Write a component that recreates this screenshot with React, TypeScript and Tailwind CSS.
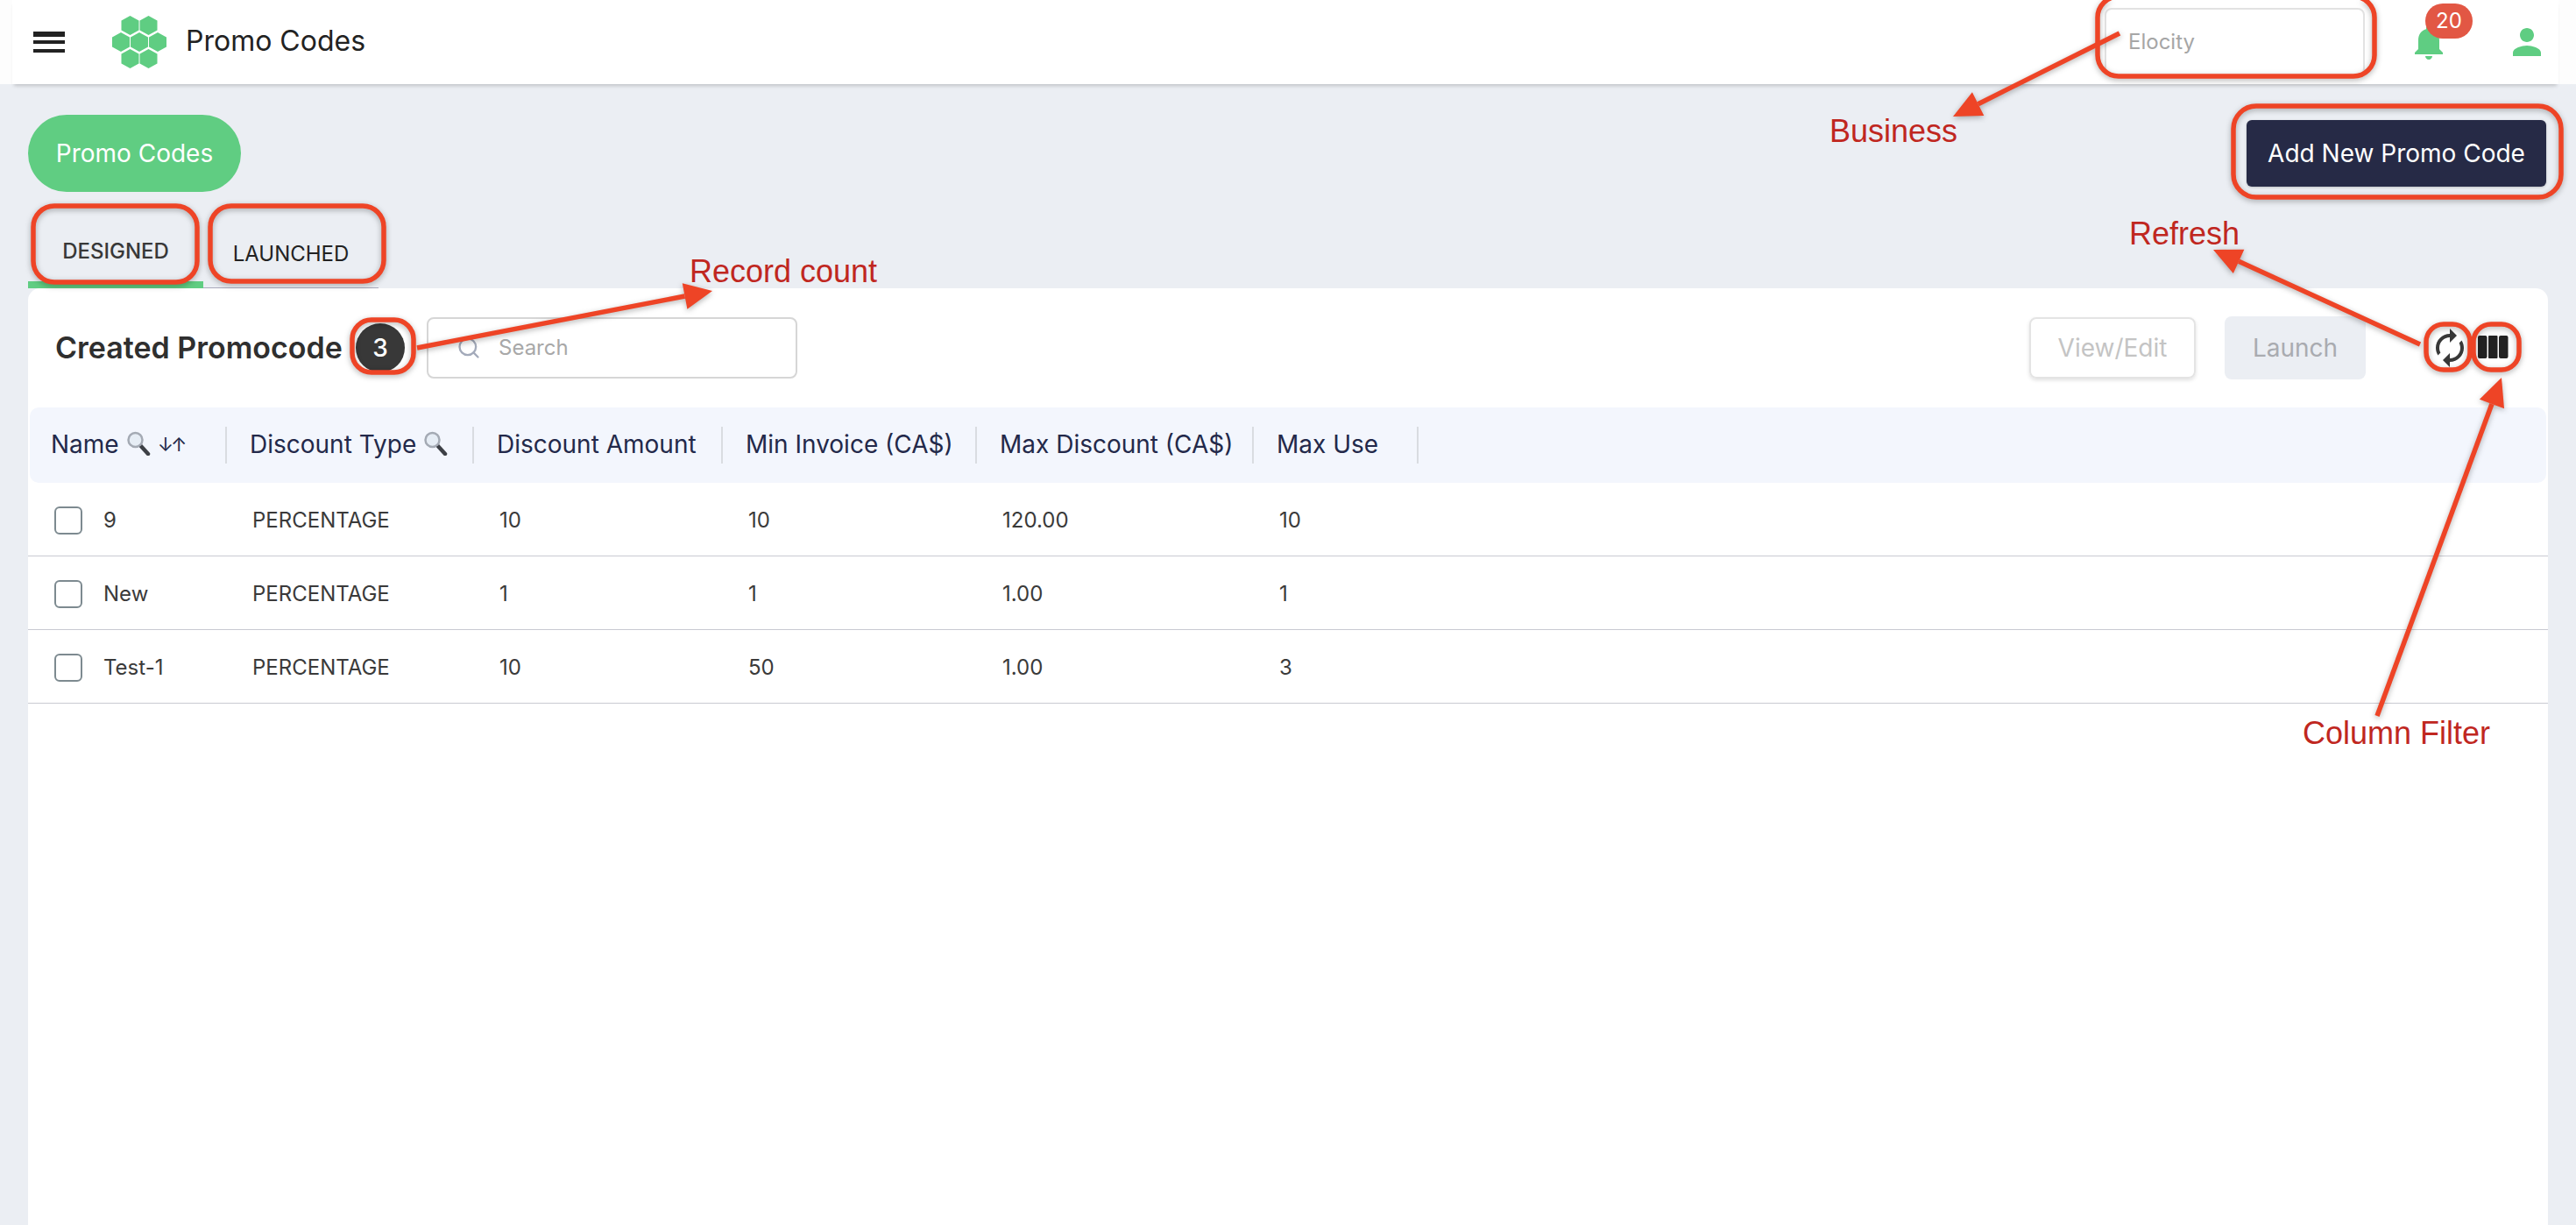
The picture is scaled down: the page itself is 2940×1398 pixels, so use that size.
import { Search } from 'lucide-react';

const columns = [
  { label: 'Name', search: true, sort: true },
  { label: 'Discount Type', search: true },
  { label: 'Discount Amount' },
  { label: 'Min Invoice (CA$)' },
  { label: 'Max Discount (CA$)' },
  { label: 'Max Use' },
];

const rows = [
  ['9', 'PERCENTAGE', '10', '10', '120.00', '10'],
  ['New', 'PERCENTAGE', '1', '1', '1.00', '1'],
  ['Test-1', 'PERCENTAGE', '10', '50', '1.00', '3'],
];

const hexCenters = [
  [20.5, 11],
  [41.5, 11],
  [10, 30],
  [31, 30],
  [52, 30],
  [20.5, 49],
  [41.5, 49],
];

function Logo() {
  return (
    <svg width="62" height="60" viewBox="0 0 62 60" fill="#5fcd82">
      {hexCenters.map(([x, y]) => (
        <polygon
          key={`${x}-${y}`}
          points={`${x},${y - 11} ${x + 10},${y - 5.5} ${x + 10},${y + 5.5} ${x},${y + 11} ${x - 10},${y + 5.5} ${x - 10},${y - 5.5}`}
        />
      ))}
    </svg>
  );
}

function MaterialIcon({ d, className }: { d: string; className: string }) {
  return (
    <svg viewBox="0 0 24 24" fill="currentColor" className={className}>
      <path d={d} />
    </svg>
  );
}

function ColumnsIcon() {
  return (
    <svg width="48" height="48" viewBox="0 0 48 48" fill="#222222">
      <rect x="8" y="10" width="10.5" height="26" rx="2" />
      <rect x="20" y="10" width="10.5" height="26" rx="1" />
      <rect x="32" y="10" width="10.5" height="26" rx="2" />
    </svg>
  );
}

function Magnifier() {
  return (
    <svg width="28" height="28" viewBox="0 0 28 28" className="shrink-0">
      <line x1="15" y1="15" x2="25" y2="26" stroke="#3d4046" strokeWidth="4.5" strokeLinecap="round" />
      <circle cx="10.5" cy="10" r="8" fill="#e6edf5" stroke="#a4aab4" strokeWidth="2.5" />
    </svg>
  );
}

function Arrow({ x1, y1, x2, y2 }: { x1: number; y1: number; x2: number; y2: number }) {
  const len = Math.hypot(x2 - x1, y2 - y1);
  const ux = (x2 - x1) / len;
  const uy = (y2 - y1) / len;
  const bx = x2 - ux * 32;
  const by = y2 - uy * 32;
  return (
    <g>
      <line x1={x1} y1={y1} x2={bx} y2={by} stroke="#ee4426" strokeWidth="5.5" />
      <polygon
        fill="#ee4426"
        points={`${x2},${y2} ${bx - uy * 15},${by + ux * 15} ${bx + uy * 15},${by - ux * 15}`}
      />
    </g>
  );
}

const boxes = [
  [38, 235, 187, 87, 24],
  [240, 235, 198, 86, 24],
  [2394, -4, 316, 91, 24],
  [2549, 121, 374, 104, 26],
  [402, 365, 70, 60, 22],
  [2769, 370, 50, 52, 20],
  [2823, 370, 52, 52, 20],
];

function Annotations() {
  return (
    <>
      <svg
        viewBox="0 0 2940 1398"
        fill="none"
        className="absolute left-0 top-0 z-20 h-[1398px] w-[2940px] drop-shadow-[0_2px_3px_rgba(0,0,0,0.3)]"
      >
        {boxes.map(([x, y, w, h, r]) => (
          <rect key={`${x}-${y}`} x={x} y={y} width={w} height={h} rx={r} stroke="#ee4426" strokeWidth="5.5" />
        ))}
        <Arrow x1={2419} y1={38} x2={2229} y2={133} />
        <Arrow x1={476} y1={397} x2={813} y2={332} />
        <Arrow x1={2762} y1={393} x2={2526} y2={285} />
        <Arrow x1={2713} y1={817} x2={2855} y2={431} />
      </svg>
      <div className="absolute left-[2088px] top-[130px] z-20 text-[36px] leading-10 text-[#c0271f] font-['Liberation_Sans',sans-serif]">Business</div>
      <div className="absolute left-[787px] top-[290px] z-20 text-[36px] leading-10 text-[#c0271f] font-['Liberation_Sans',sans-serif]">Record count</div>
      <div className="absolute left-[2430px] top-[247px] z-20 text-[36px] leading-10 text-[#c0271f] font-['Liberation_Sans',sans-serif]">Refresh</div>
      <div className="absolute left-[2628px] top-[817px] z-20 text-[36px] leading-10 text-[#c0271f] font-['Liberation_Sans',sans-serif]">Column Filter</div>
    </>
  );
}

function Header() {
  return (
    <div className="relative z-10 bg-[#fdfdfd] pl-[14px] pr-[20px]">
      <header className="flex h-24 items-center bg-white pl-[18px] pr-[12px] shadow-[0_4px_4px_-2px_rgba(0,0,0,0.18)]">
        <MaterialIcon d="M3 18h18v-2H3v2zm0-5h18v-2H3v2zm0-6v2h18V6H3z" className="h-12 w-12 text-[#222222]" />
        <div className="ml-[48px]">
          <Logo />
        </div>
        <div className="mb-[2px] ml-[22px] text-[32px] text-[#222222]">Promo Codes</div>
        <div className="ml-auto flex h-[78px] w-[297px] items-center rounded-[8px] border-2 border-[#e2e2e2] pl-[25px] text-[24px] text-[#a6a6a6]">
          Elocity
        </div>
        <div className="relative ml-[49px] h-12 w-12">
          <MaterialIcon
            d="M12 22c1.1 0 2-.9 2-2h-4c0 1.1.89 2 2 2zm6-6v-5c0-3.07-1.64-5.64-4.5-6.32V4c0-.83-.67-1.5-1.5-1.5s-1.5.67-1.5 1.5v.68C7.63 5.36 6 7.92 6 11v5l-2 2v1h16v-1l-2-2z"
            className="h-12 w-12 text-[#5fcd82]"
          />
          <span className="absolute left-[20px] top-[-20px] flex h-10 w-[54px] items-center justify-center rounded-full bg-[#e25744] text-[24px] text-white">
            20
          </span>
        </div>
        <MaterialIcon
          d="M12 12c2.21 0 4-1.79 4-4s-1.79-4-4-4-4 1.79-4 4 1.79 4 4 4zm0 2c-2.67 0-8 1.34-8 4v2h16v-2c0-2.66-5.33-4-8-4z"
          className="ml-[64px] h-12 w-12 text-[#5fcd82]"
        />
      </header>
    </div>
  );
}

const gridCols = 'grid grid-cols-[227px_282px_284px_290px_316px_188px_1fr]';
const headCols = 'grid grid-cols-[225px_282px_284px_290px_316px_188px_1fr]';

function PromoTable() {
  return (
    <div>
      <div className={`${headCols} mx-[2px] h-[86px] items-center rounded-[10px] bg-[#f3f6fd] text-[28px] text-[#23294a]`}>
        {columns.map((col, i) => (
          <div key={col.label} className={`flex h-[42px] items-center border-r-2 border-[#d9dce1] ${i === 0 ? 'pl-[24px]' : 'pl-[26px]'}`}>
            <span className="mt-[-2px]">{col.label}</span>
            {col.search && (
              <span className="ml-[8px] mt-[-4px]">
                <Magnifier />
              </span>
            )}
            {col.sort && <span className="ml-[8px] mt-[-2px] text-[22px] tracking-[-3px]">↓↑</span>}
          </div>
        ))}
      </div>
      {rows.map((row) => (
        <div key={row[0]} className={`${gridCols} h-[84px] items-center border-b border-[#c9cad2] pt-[2px] text-[24px] text-[#3a3a3a]`}>
          <div className="flex items-center pl-[30px]">
            <span className="h-8 w-8 rounded-[6px] border-2 border-[#7d8a90]" />
            <span className="ml-[24px]">{row[0]}</span>
          </div>
          {row.slice(1).map((cell, i) => (
            <div key={i} className="pl-[29px]">
              {cell}
            </div>
          ))}
        </div>
      ))}
    </div>
  );
}

export default function App() {
  return (
    <div className="relative flex h-[1398px] w-[2940px] flex-col overflow-hidden bg-[#ebeef3] font-['Inter',sans-serif]">
      <Header />
      <main className="flex min-h-0 flex-1 flex-col pl-[32px] pr-[32px] pt-[35px]">
        <div className="flex items-center justify-between">
          <div className="flex h-[88px] w-[243px] items-center justify-center rounded-full bg-[#60cd82] text-[28px] text-white">
            Promo Codes
          </div>
          <button className="mr-[2px] h-[76px] w-[342px] rounded-[6px] bg-[#262a46] text-[28px] text-white shadow-[0_1px_3px_rgba(0,0,0,0.2)]">
            Add New Promo Code
          </button>
        </div>

        <div className="mt-[26px] flex h-[84px] text-[24px]">
          <div className="flex w-[200px] items-start justify-center border-b-[8px] border-[#60cd82] pt-[24px] font-medium text-[#383838]">
            DESIGNED
          </div>
          <div className="flex w-[200px] items-start justify-center border-b border-[#a9a9bb] pt-[27px] text-[#222222]">
            LAUNCHED
          </div>
        </div>

        <section className="min-h-0 flex-1 rounded-t-[14px] bg-white">
          <div className="flex h-[136px] items-center pl-[31px] pr-[40px]">
            <h1 className="mt-[-2px] w-[326px] whitespace-nowrap text-[34px] font-semibold text-[#2f2f2f]">Created Promocode</h1>
            <div className="ml-[17px] flex h-[56px] w-[56px] items-center justify-center rounded-full bg-[#383838] text-[28px] font-medium text-white">
              3
            </div>
            <div className="ml-[25px] flex h-[70px] w-[423px] items-center rounded-[8px] border-2 border-[#d6d6d6] pl-[32px] text-[24px] text-[#a8a8a8]">
              <Search className="h-[28px] w-[28px] text-[#a3aaba]" strokeWidth={2} />
              <span className="ml-[20px]">Search</span>
            </div>
            <button className="ml-auto h-[70px] w-[190px] rounded-[8px] border-2 border-[#e4e4e4] text-[28px] text-[#c4c4c4] shadow-[0_2px_4px_rgba(0,0,0,0.12)]">
              View/Edit
            </button>
            <button className="ml-[33px] h-[72px] w-[161px] rounded-[8px] bg-[#ebeef3] text-[28px] text-[#a9abb0]">
              Launch
            </button>
            <MaterialIcon
              d="M12 6v3l4-4-4-4v3c-4.42 0-8 3.58-8 8 0 1.57.46 3.03 1.24 4.26L6.7 14.8c-.45-.83-.7-1.79-.7-2.8 0-3.31 2.69-6 6-6zm6.76 1.74L17.3 9.2c.44.84.7 1.79.7 2.8 0 3.31-2.69 6-6 6v-3l-4 4 4 4v-3c4.42 0 8-3.58 8-8 0-1.57-.46-3.03-1.24-4.26z"
              className="ml-[72px] h-12 w-12 text-[#383838]"
            />
            <ColumnsIcon />
          </div>
          <PromoTable />
        </section>
      </main>
      <Annotations />
    </div>
  );
}
